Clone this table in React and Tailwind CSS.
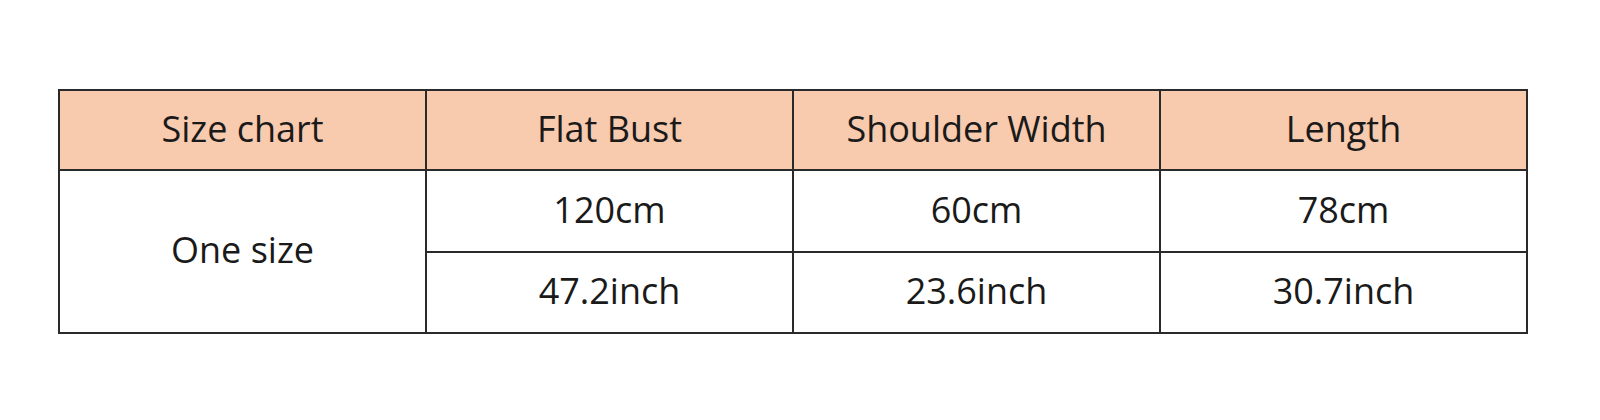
export default function App() {
  const cell = 'border-2 border-[#2a2a2a] text-center align-middle pb-[3px]';
  return (
    <div className="w-[1600px] h-[420px] bg-white pt-[89px] pl-[58px]" style={{ fontFamily: '"Open Sans", "Noto Sans", sans-serif' }}>
      <table className="border-collapse w-[1470px] table-fixed text-[36px] leading-none text-[#1a1a1a]">
        <tbody>
          <tr className="h-[80px] bg-[#f8caae]">
            <td className={cell}>Size chart</td>
            <td className={cell}>Flat Bust</td>
            <td className={cell}>Shoulder Width</td>
            <td className={cell}>Length</td>
          </tr>
          <tr className="h-[82px]">
            <td className={cell} rowSpan={2}>One size</td>
            <td className={cell}>120cm</td>
            <td className={cell}>60cm</td>
            <td className={cell}>78cm</td>
          </tr>
          <tr className="h-[81px]">
            <td className={cell}>47.2inch</td>
            <td className={cell}>23.6inch</td>
            <td className={cell}>30.7inch</td>
          </tr>
        </tbody>
      </table>
    </div>
  );
}
